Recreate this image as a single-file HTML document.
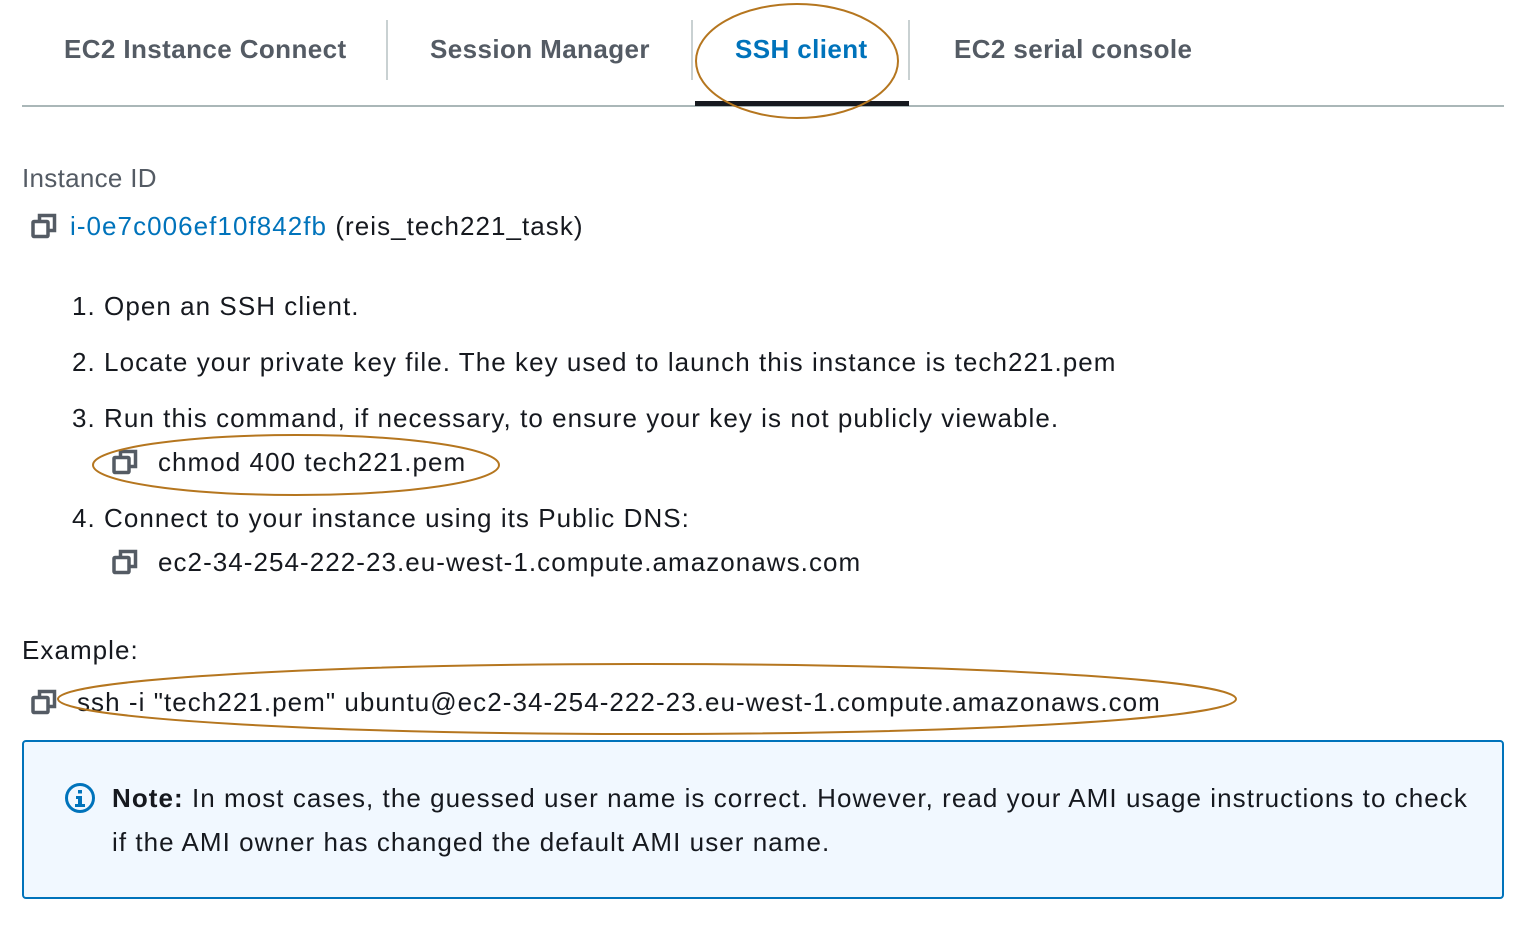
<!DOCTYPE html>
<html><head><meta charset="utf-8"><style>
body{margin:0;width:1534px;height:940px;background:#fff;position:relative;overflow:hidden;font-family:"Liberation Sans",sans-serif;color:#16191f}
.a{position:absolute;white-space:nowrap}
.tab{font-weight:bold;font-size:26px;color:#545b64;top:34px;letter-spacing:0.4px}
.sep{position:absolute;width:2px;background:#c9d1d2;top:20px;height:60px}
.t{font-size:26px;letter-spacing:1.05px}
.cp{position:absolute;width:28px;height:28px}
</style></head><body>
<div class="a tab" style="left:64px">EC2 Instance Connect</div>
<div class="sep" style="left:386px"></div>
<div class="a tab" style="left:430px">Session Manager</div>
<div class="sep" style="left:691px"></div>
<div class="a tab" style="left:735px;color:#0073bb">SSH client</div>
<div class="sep" style="left:908px"></div>
<div class="a tab" style="left:954px">EC2 serial console</div>
<div style="position:absolute;left:22px;top:105px;width:1482px;height:2px;background:#aab7b8"></div>
<div style="position:absolute;left:695px;top:101px;width:214px;height:5px;background:#16191f"></div>

<div class="a t" style="left:22px;top:163px;color:#545b64;letter-spacing:0.3px">Instance ID</div>
<svg class="cp" style="left:30px;top:212px" viewBox="0 0 28 28"><rect x="3" y="9.5" width="15" height="15" rx="1" fill="none" stroke="#545b64" stroke-width="3.5"/><path d="M9.5 9.5V3.5h15v15h-6.5" fill="none" stroke="#545b64" stroke-width="3.5"/></svg>
<div class="a t" style="left:70px;top:211px"><span style="color:#0073bb">i-0e7c006ef10f842fb</span> (reis_tech221_task)</div>

<div class="a t" style="left:72px;top:291px">1. Open an SSH client.</div>
<div class="a t" style="left:72px;top:347px">2. Locate your private key file. The key used to launch this instance is tech221.pem</div>
<div class="a t" style="left:72px;top:403px">3. Run this command, if necessary, to ensure your key is not publicly viewable.</div>
<svg class="cp" style="left:111px;top:448px" viewBox="0 0 28 28"><rect x="3" y="9.5" width="15" height="15" rx="1" fill="none" stroke="#545b64" stroke-width="3.5"/><path d="M9.5 9.5V3.5h15v15h-6.5" fill="none" stroke="#545b64" stroke-width="3.5"/></svg>
<div class="a t" style="left:158px;top:447px">chmod 400 tech221.pem</div>
<div class="a t" style="left:72px;top:503px">4. Connect to your instance using its Public DNS:</div>
<svg class="cp" style="left:111px;top:548px" viewBox="0 0 28 28"><rect x="3" y="9.5" width="15" height="15" rx="1" fill="none" stroke="#545b64" stroke-width="3.5"/><path d="M9.5 9.5V3.5h15v15h-6.5" fill="none" stroke="#545b64" stroke-width="3.5"/></svg>
<div class="a t" style="left:158px;top:547px">ec2-34-254-222-23.eu-west-1.compute.amazonaws.com</div>

<div class="a t" style="left:22px;top:635px">Example:</div>
<svg class="cp" style="left:30px;top:688px" viewBox="0 0 28 28"><rect x="3" y="9.5" width="15" height="15" rx="1" fill="none" stroke="#545b64" stroke-width="3.5"/><path d="M9.5 9.5V3.5h15v15h-6.5" fill="none" stroke="#545b64" stroke-width="3.5"/></svg>
<div class="a t" style="left:77px;top:687px">ssh -i "tech221.pem" ubuntu@ec2-34-254-222-23.eu-west-1.compute.amazonaws.com</div>

<div style="position:absolute;left:22px;top:740px;width:1478px;height:155px;border:2px solid #0073bb;border-radius:4px;background:#f1f8ff"></div>
<svg style="position:absolute;left:64px;top:782px" width="32" height="32" viewBox="0 0 32 32"><circle cx="16" cy="16" r="13.5" fill="none" stroke="#0073bb" stroke-width="3"/><rect x="14" y="8" width="4" height="3.5" fill="#0073bb"/><path d="M12 14h6v8h3v3H11v-3h3v-5h-2z" fill="#0073bb"/></svg>
<div class="a t" style="left:112px;top:776px;line-height:44px;white-space:normal;width:1378px"><b>Note:</b> In most cases, the guessed user name is correct. However, read your AMI usage instructions to check if the AMI owner has changed the default AMI user name.</div>

<svg style="position:absolute;left:0;top:0" width="1534" height="940"><g fill="none" stroke="#b5761f" stroke-width="2"><ellipse cx="797" cy="61" rx="101" ry="57"/><ellipse cx="296" cy="465" rx="203" ry="30"/><ellipse cx="647" cy="699" rx="589" ry="35"/></g></svg>
</body></html>
